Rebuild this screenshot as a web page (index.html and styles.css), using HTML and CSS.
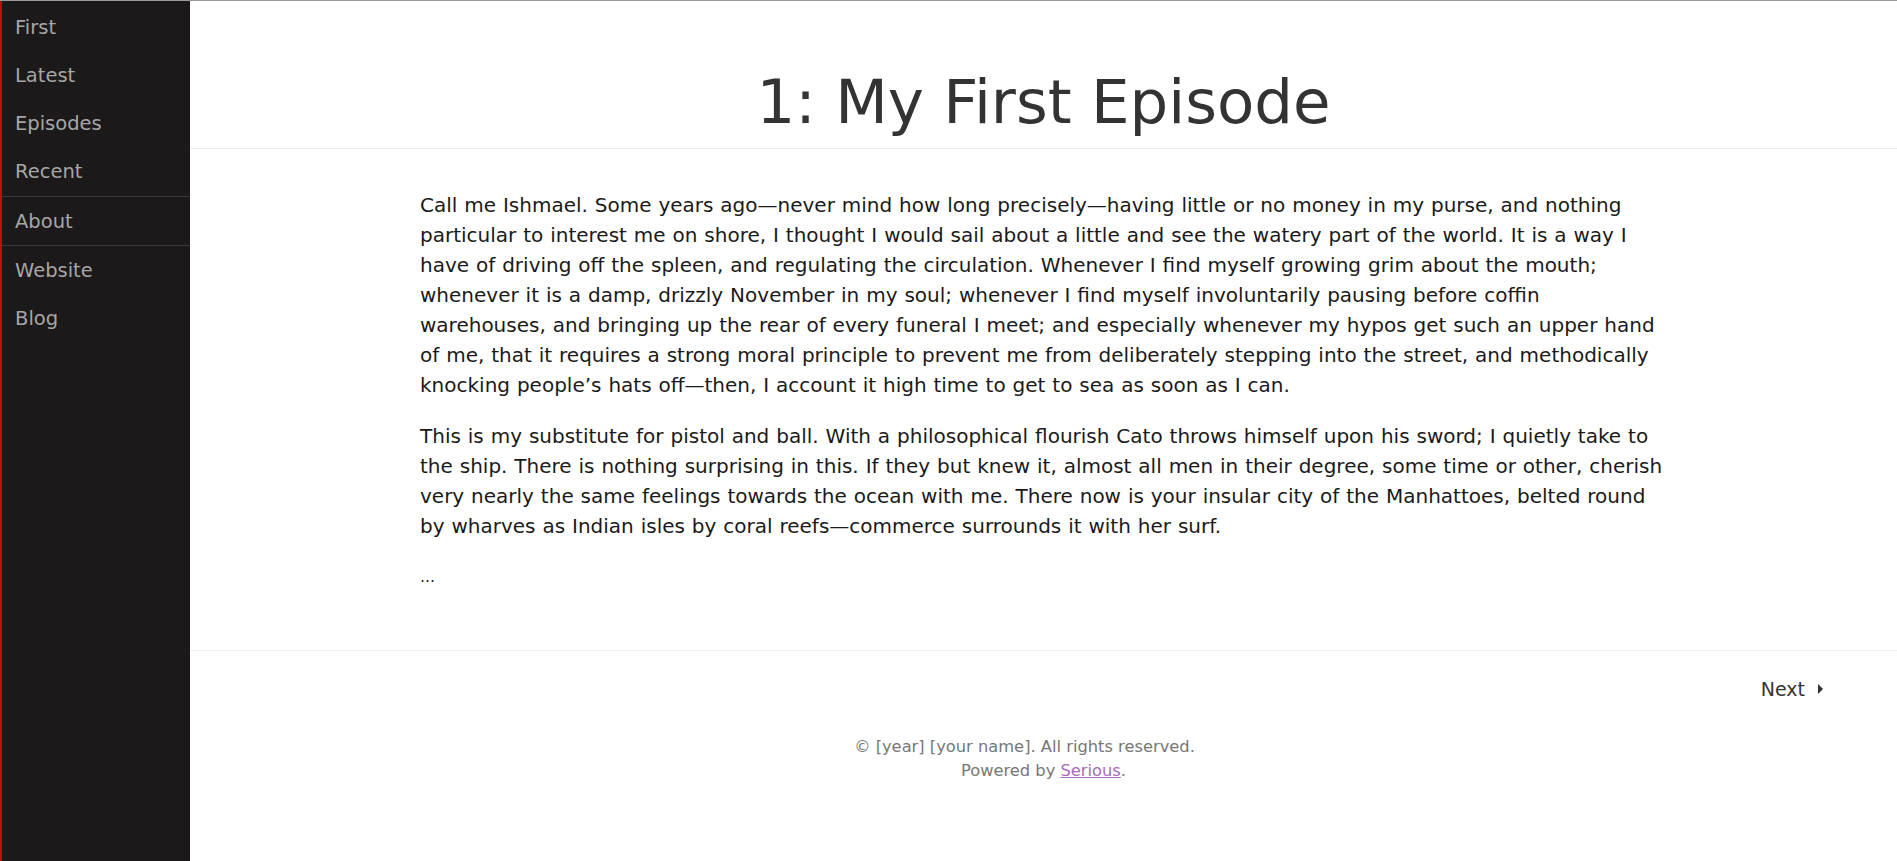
FILE: index.html
```html
<!DOCTYPE html>
<html lang="en">
<head>
<meta charset="utf-8">
<title>1: My First Episode</title>
<link rel="stylesheet" href="styles.css">
</head>
<body>
<aside class="sidebar">
  <ul class="nav-group">
    <li><a href="#">First</a></li>
    <li><a href="#">Latest</a></li>
    <li><a href="#">Episodes</a></li>
    <li><a href="#">Recent</a></li>
  </ul>
  <ul class="nav-group">
    <li><a href="#">About</a></li>
  </ul>
  <ul class="nav-group">
    <li><a href="#">Website</a></li>
    <li><a href="#">Blog</a></li>
  </ul>
</aside>
<main class="main">
  <header class="title-bar">
    <h1 class="title">1: My First Episode</h1>
  </header>
  <article class="content">
    <p>Call me Ishmael. Some years ago—never mind how long precisely—having little or no money in my purse, and nothing particular to interest me on shore, I thought I would sail about a little and see the watery part of the world. It is a way I have of driving off the spleen, and regulating the circulation. Whenever I find myself growing grim about the mouth; whenever it is a damp, drizzly November in my soul; whenever I find myself involuntarily pausing before coffin warehouses, and bringing up the rear of every funeral I meet; and especially whenever my hypos get such an upper hand of me, that it requires a strong moral principle to prevent me from deliberately stepping into the street, and methodically knocking people’s hats off—then, I account it high time to get to sea as soon as I can.</p>
    <p>This is my substitute for pistol and ball. With a philosophical flourish Cato throws himself upon his sword; I quietly take to the ship. There is nothing surprising in this. If they but knew it, almost all men in their degree, some time or other, cherish very nearly the same feelings towards the ocean with me. There now is your insular city of the Manhattoes, belted round by wharves as Indian isles by coral reefs—commerce surrounds it with her surf.</p>
    <p class="more">…</p>
  </article>
  <nav class="pager">
    <a href="#" class="next">Next <span class="caret"></span></a>
  </nav>
  <footer class="footer">
    <p>© [year] [your name]. All rights reserved.<span class="spacer"></span><br>Powered by <a href="#">Serious</a>.</p>
  </footer>
</main>
</body>
</html>
```

FILE: styles.css
```css
html, body {
  margin: 0;
  padding: 0;
}

body {
  display: flex;
  min-height: 100vh;
  box-sizing: border-box;
  border-top: 1px solid #9a9a9a;
  background: #fff;
  font-family: "DejaVu Sans", Verdana, sans-serif;
  color: #1a1a1a;
}

.sidebar {
  flex: 0 0 188px;
  background: #1b1919;
  border-left: 2px solid #c40c0c;
  padding-top: 3px;
}

.nav-group {
  list-style: none;
  margin: 0;
  padding: 0;
  border-bottom: 1px solid #3b3939;
}

.nav-group:last-child {
  border-bottom: none;
}

.nav-group a {
  display: block;
  height: 48px;
  line-height: 48px;
  padding-left: 13px;
  font-size: 19.5px;
  color: #a6a6a6;
  text-decoration: none;
}

.nav-group + .nav-group a {
  line-height: 50px;
}

.main {
  flex: 1;
  display: flex;
  flex-direction: column;
}

.title-bar {
  border-bottom: 1px solid #ececec;
  text-align: center;
}

.title {
  margin: 0;
  padding: 61px 0 6px;
  font-size: 61px;
  line-height: 80px;
  font-weight: normal;
  color: #333;
}

.content {
  width: 1247px;
  margin: 0 auto;
  padding: 41px 0 37px;
  font-size: 20px;
  line-height: 30px;
  word-spacing: 0.55px;
  color: #1a1a1a;
}

.content p {
  margin: 0 0 21px;
}

.content .more {
  font-size: 15px;
}

.pager {
  border-top: 1px solid #f0f0f0;
  display: flex;
  justify-content: flex-end;
  padding: 24px 74px 0 0;
}

.next {
  display: flex;
  align-items: center;
  gap: 13px;
  font-size: 19px;
  line-height: 28px;
  color: #333;
  text-decoration: none;
}

.caret {
  width: 0;
  height: 0;
  border-top: 5px solid transparent;
  border-bottom: 5px solid transparent;
  border-left: 5px solid #333;
}

.footer {
  text-align: center;
  font-size: 16.3px;
  line-height: 24px;
  color: #777;
}

.footer p {
  margin: 32px 0 0;
}

.footer a {
  color: #a86bbd;
}

.spacer {
  display: inline-block;
  width: 38px;
}
```
